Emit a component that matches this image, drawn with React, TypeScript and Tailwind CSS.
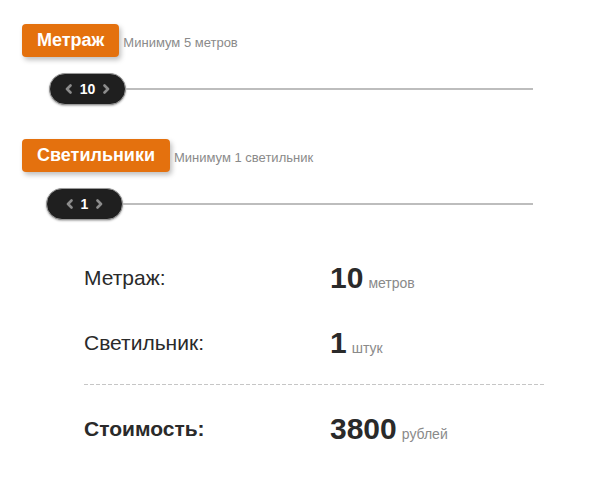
import type { ReactNode } from 'react';

const Chevron = ({ dir }: { dir: 'left' | 'right' }) => (
  <svg width="7" height="10" viewBox="0 0 7 10" className="shrink-0">
    <polyline
      points={dir === 'left' ? '5.5,1.5 2,5 5.5,8.5' : '1.5,1.5 5,5 1.5,8.5'}
      fill="none"
      stroke="#8c8c8c"
      strokeWidth="2.6"
      strokeLinecap="round"
      strokeLinejoin="round"
    />
  </svg>
);

const Section = ({
  title,
  hint,
  value,
  handleOffset,
}: {
  title: string;
  hint: string;
  value: number;
  handleOffset: string;
}) => (
  <div>
    <div className="flex items-center pl-[22px]">
      <div className="h-[33px] px-[15px] flex items-center rounded-[4px] bg-[#e4710e] text-white text-[18px] font-bold shadow-[2px_3px_5px_rgba(0,0,0,0.25)]">
        {title}
      </div>
      <span className="ml-[4px] mt-[5px] text-[13px] text-[#8a8a8a]">{hint}</span>
    </div>
    <div className={`flex items-center mt-[16px] pr-[78px] ${handleOffset}`}>
      <div className="w-[77px] h-[32px] shrink-0 rounded-full bg-[#1f1f1f] border border-[#9a9a9a] shadow-[0_1px_2px_rgba(0,0,0,0.3)] flex items-center justify-center gap-[8px]">
        <Chevron dir="left" />
        <span className="text-white text-[14px] font-bold">{value}</span>
        <Chevron dir="right" />
      </div>
      <div className="flex-1 h-[2px] bg-[#bdbdbd]" />
    </div>
  </div>
);

const Row = ({ label, value, unit, bold, className }: { label: string; value: ReactNode; unit: string; bold?: boolean; className?: string }) => (
  <div className={`flex items-center h-[36px] ${className ?? ''}`}>
    <div className={`w-[246px] text-[21px] text-[#2a2a2a] ${bold ? 'font-bold' : ''}`}>{label}</div>
    <div className="flex items-baseline">
      <span className="text-[30px] font-bold leading-none text-[#2a2a2a]">{value}</span>
      <span className="ml-[5px] text-[14px] text-[#8a8a8a]">{unit}</span>
    </div>
  </div>
);

export default function App() {
  return (
    <div className="w-[611px] h-[493px] bg-white pt-[24px] font-['Liberation_Sans',Arial,sans-serif]">
      <Section title="Метраж" hint="Минимум 5 метров" value={10} handleOffset="pl-[49px]" />
      <div className="mt-[34px]">
        <Section title="Светильники" hint="Минимум 1 светильник" value={1} handleOffset="pl-[46px]" />
      </div>
      <div className="pl-[84px] mt-[40px]">
        <Row label="Метраж:" value="10" unit="метров" />
        <Row label="Светильник:" value="1" unit="штук" className="mt-[29px]" />
        <div className="w-[462px] h-px mt-[23px] bg-[repeating-linear-gradient(to_right,#c6c6c6_0_4px,transparent_4px_6px)]" />
        <Row label="Стоимость:" value="3800" unit="рублей" bold className="mt-[26px]" />
      </div>
    </div>
  );
}
